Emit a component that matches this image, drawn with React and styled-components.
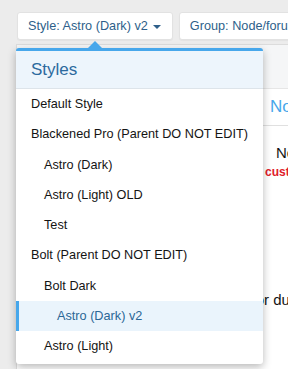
import React from "react"
import styled, { createGlobalStyle } from "styled-components"

const GlobalStyle = createGlobalStyle`
  html, body {
    margin: 0;
    padding: 0;
    background: #ececec;
    font-family: "Liberation Sans", Arial, sans-serif;
    -webkit-font-smoothing: antialiased;
  }
`

const Page = styled.div`
  width: 288px;
  height: 369px;
  overflow: hidden;
  padding: 12px 0 0 16px;
  box-sizing: border-box;
`

const Toolbar = styled.div`
  display: flex;
  gap: 6px;
  padding-left: 1px;
  white-space: nowrap;
`

const Anchor = styled.div`
  position: relative;
  flex: none;
`

const FilterButton = styled.button`
  display: flex;
  align-items: center;
  gap: 5px;
  height: 28px;
  padding: 0 11px 0 10px;
  border: 1px solid #e2e2e2;
  border-radius: 3px;
  background: #fff;
  color: #2e5f8a;
  font-family: inherit;
  font-size: 12.7px;
  white-space: nowrap;
  flex: none;
  box-shadow: 0 1px 1px rgba(0, 0, 0, 0.04);
`

const Caret = styled.span`
  width: 0;
  height: 0;
  border-left: 4px solid transparent;
  border-right: 4px solid transparent;
  border-top: 4px solid #2e5f8a;
  margin-top: 1px;
`

const Panel = styled.div`
  margin-top: 4px;
  background: #fff;
  border: 1px solid #dcdcdc;
  border-right: none;
  height: 400px;
`

const PanelHead = styled.div`
  height: 43px;
  background: #f5f6f7;
  border-bottom: 1px solid #e6e6e6;
`

const Tabs = styled.div`
  height: 36px;
  border-bottom: 1px solid #e0e0e0;
  display: flex;
  align-items: center;
  padding-left: 253px;
  color: #47a7eb;
  font-size: 17px;
  white-space: nowrap;
`

const Body = styled.div`
  padding-top: 18px;
  white-space: nowrap;
`

const Line = styled.div`
  padding-left: ${p => p.$indent}px;
  margin-top: ${p => p.$gap || 0}px;
  font-size: ${p => p.$size || 14}px;
  font-weight: ${p => (p.$bold ? 700 : 400)};
  color: ${p => p.$color || "#141414"};
  line-height: 18px;
`

const Menu = styled.div`
  position: absolute;
  top: 36px;
  left: -1px;
  width: 247px;
  background: #fff;
  border-top: 3px solid #47a7eb;
  border-radius: 3px;
  box-shadow: 0 3px 9px rgba(0, 0, 0, 0.28);
  padding-bottom: 3px;
  z-index: 2;
`

const Arrow = styled.span`
  position: absolute;
  top: -10px;
  left: 72px;
  width: 0;
  height: 0;
  border-left: 7px solid transparent;
  border-right: 7px solid transparent;
  border-bottom: 7px solid #47a7eb;
`

const MenuHeader = styled.div`
  height: 37px;
  display: flex;
  align-items: center;
  padding-left: 15px;
  background: #edf5fc;
  border-bottom: 1px solid #dde4ea;
  color: #2c6a9e;
  font-size: 17px;
`

const Item = styled.div`
  height: 30.25px;
  display: flex;
  align-items: center;
  box-sizing: border-box;
  padding-left: ${p => (p.$selected ? 12 : 15) + p.$level * 13}px;
  font-size: 12.7px;
  color: ${p => (p.$selected ? "#2b6796" : "#141414")};
  background: ${p => (p.$selected ? "#eaf4fc" : "transparent")};
  border-left: ${p => (p.$selected ? "3px solid #47a7eb" : "none")};
  white-space: nowrap;
`

const styles = [
  { name: "Default Style", level: 0 },
  { name: "Blackened Pro (Parent DO NOT EDIT)", level: 0 },
  { name: "Astro (Dark)", level: 1 },
  { name: "Astro (Light) OLD", level: 1 },
  { name: "Test", level: 1 },
  { name: "Bolt (Parent DO NOT EDIT)", level: 0 },
  { name: "Bolt Dark", level: 1 },
  { name: "Astro (Dark) v2", level: 2, selected: true },
  { name: "Astro (Light)", level: 1 },
]

const App = () => (
  <>
    <GlobalStyle />
    <Page>
      <Toolbar>
        <Anchor>
          <FilterButton>
            Style: Astro (Dark) v2 <Caret />
          </FilterButton>
          <Menu>
            <Arrow />
            <MenuHeader>Styles</MenuHeader>
            {styles.map(s => (
              <Item key={s.name} $level={s.level} $selected={s.selected}>
                {s.name}
              </Item>
            ))}
          </Menu>
        </Anchor>
        <FilterButton>Group: Node/forum list</FilterButton>
      </Toolbar>
      <Panel>
        <PanelHead />
        <Tabs>Node/forum list</Tabs>
        <Body>
          <Line $indent={259} $size={15}>
            No templates have been modified
          </Line>
          <Line $indent={248} $gap={1} $size={12} $bold $color="#e0202a">
            customized
          </Line>
          <Line $indent={162} $gap={110} $size={15}>
            Templates for duplicate
          </Line>
        </Body>
      </Panel>
    </Page>
  </>
)

export default App
